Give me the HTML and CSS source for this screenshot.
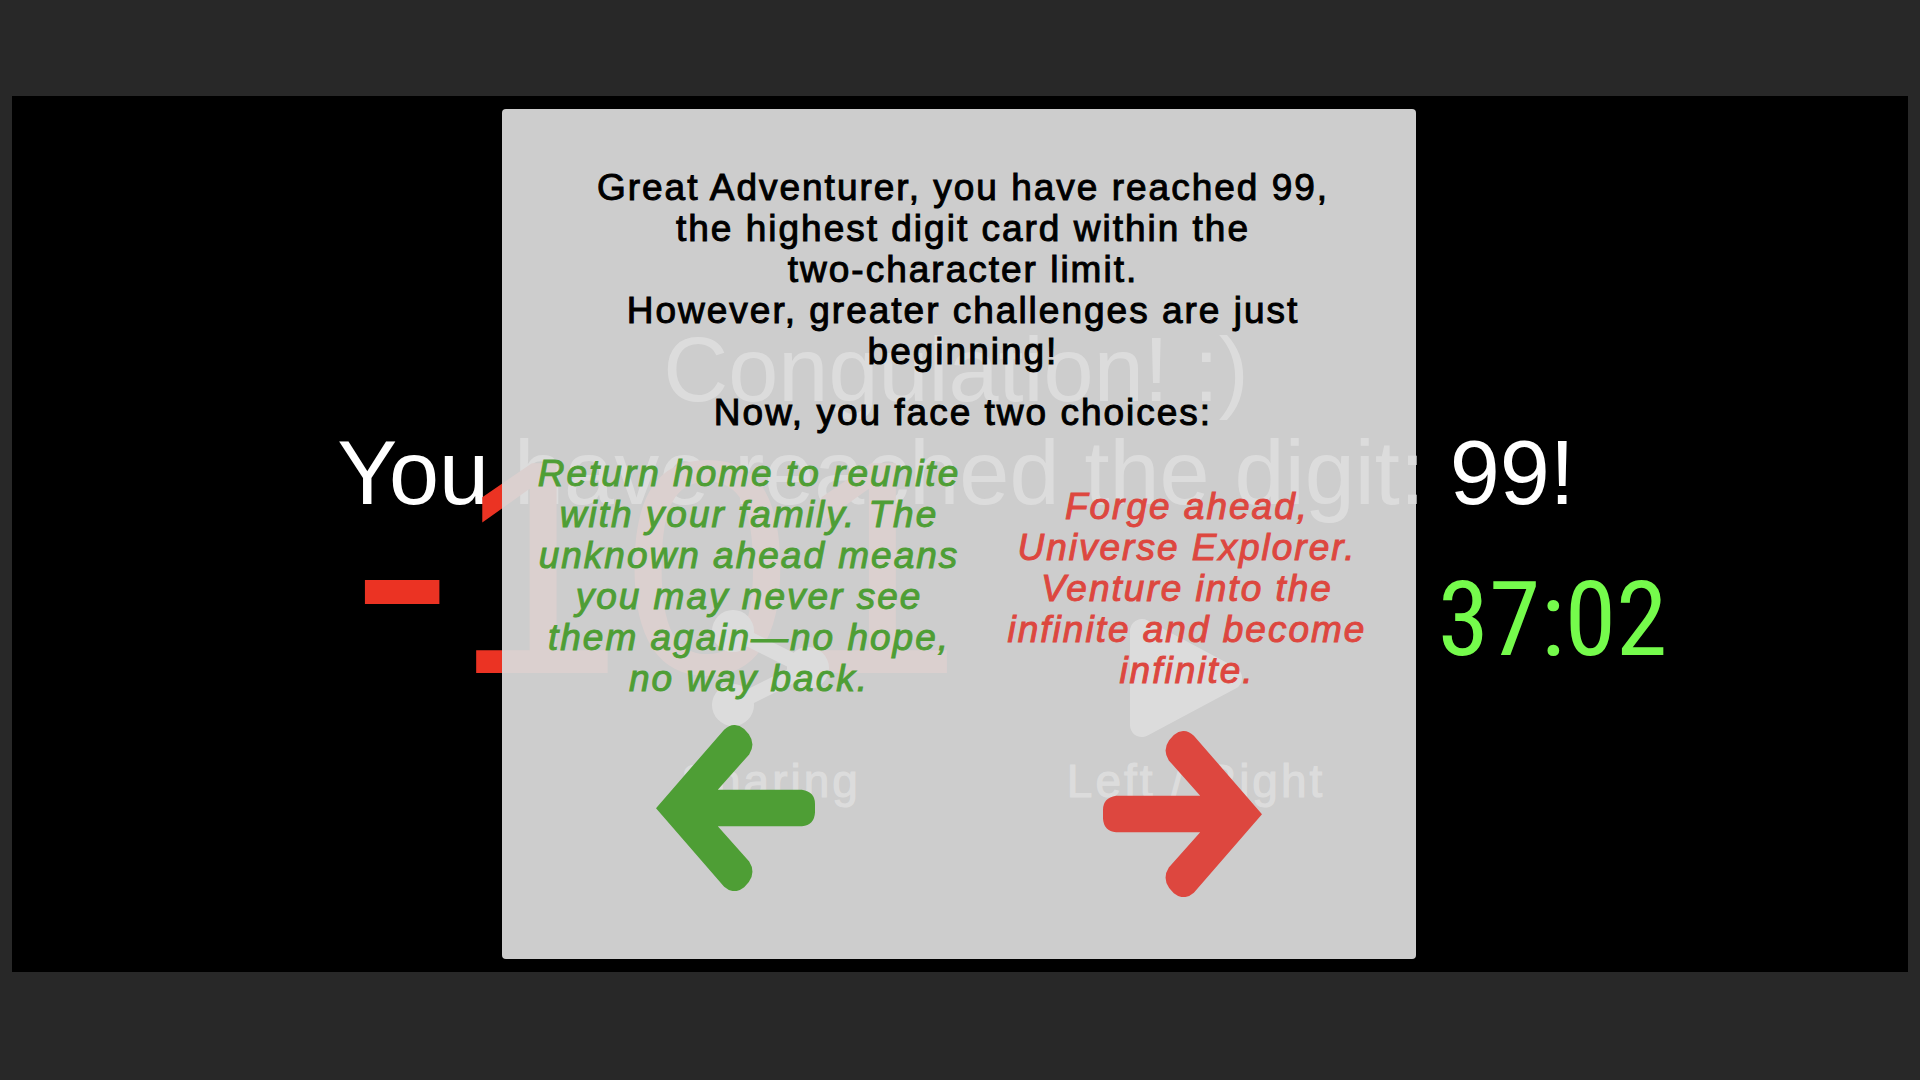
FILE: index.html
```
<!DOCTYPE html>
<html lang="en">
<head>
    <meta charset="UTF-8">
    <meta name="viewport" content="width=device-width, initial-scale=1.0">
    <title>Digit Cards</title>
    <link rel="stylesheet" href="styles.css">
</head>
<body>
    <main class="stage">
        <div class="scene">
            <p class="headline">Congulation! :)<br>You have reached the digit: 99!</p>
            <div class="penalty">-101</div>
            <div class="timer">37:02</div>
            <div class="actions">
                <button class="action">
                    <svg width="132" height="128" viewBox="0 0 132 128">
                        <path d="M28 22 L102 59 L28 96" fill="none" stroke="#fff" stroke-width="15"/>
                        <circle cx="28" cy="22" r="21" fill="#fff"/>
                        <circle cx="103" cy="59" r="21" fill="#fff"/>
                        <circle cx="28" cy="96" r="21" fill="#fff"/>
                    </svg>
                    Sharing
                </button>
                <button class="action">
                    <svg width="132" height="128" viewBox="0 0 132 128">
                        <path d="M12 22 L100 69 L12 116 Z" fill="#fff" stroke="#fff" stroke-width="24" stroke-linejoin="round"/>
                    </svg>
                    Left / Right
                </button>
            </div>
        </div>

        <section class="card">
            <p class="message">Great Adventurer, you have reached 99,<br>the highest digit card within the<br>two-character limit.<br>However, greater challenges are just<br>beginning!</p>
            <p class="message">Now, you face two choices:</p>
            <div class="choices">
                <p class="choice home" id="home-text">Return home to reunite<br>with your family. The<br>unknown ahead means<br>you may never see<br>them again—no hope,<br>no way back.</p>
                <p class="choice forge" id="forge-text">Forge ahead,<br>Universe Explorer.<br>Venture into the<br>infinite and become<br>infinite.</p>
            </div>
            <div class="arrows">
                <button class="arrow home" aria-labelledby="home-text">
                    <svg width="159" height="166" viewBox="0 0 476 497">
                        <path d="M0 249 L204 14 Q234 -13 264 12 L278 28 Q299 58 279 88 L185 194 H437 Q476 200 476 236 V262 Q474 300 437 303 H185 L279 409 Q299 440 278 470 L264 486 Q234 510 204 484 Z" fill="currentColor"/>
                    </svg>
                </button>
                <button class="arrow forge" aria-labelledby="forge-text">
                    <svg width="159" height="166" viewBox="0 0 476 497">
                        <path d="M476 249 L272 14 Q242 -13 212 12 L198 28 Q177 58 197 88 L291 194 H39 Q0 200 0 236 V262 Q2 300 39 303 H291 L197 409 Q177 440 198 470 L212 486 Q242 510 272 484 Z" fill="currentColor"/>
                    </svg>
                </button>
            </div>
        </section>
    </main>
</body>
</html>
```
FILE: styles.css
```
* {
    box-sizing: border-box;
}
body {
    margin: 0;
    min-height: 100vh;
    padding: 96px 12px 108px;
    display: flex;
    background: #282828;
    font-family: "Liberation Sans", Arial, sans-serif;
}
p {
    margin: 0;
}
button {
    border: 0;
    padding: 0;
    background: none;
    font: inherit;
    cursor: pointer;
}
svg {
    display: block;
}
.stage {
    position: relative;
    flex: 1;
    display: flex;
    justify-content: center;
    align-items: center;
    padding-right: 2px;
    background: #000;
    overflow: hidden;
}

/* finished game behind the card */
.scene {
    position: absolute;
    inset: 0;
    color: #fff;
}
.headline {
    padding: 223px 8px 0 0;
    font-size: 90px;
    line-height: 103px;
    text-align: center;
}
.penalty {
    position: absolute;
    left: 17.9%;
    top: 318px;
    font-size: 305px;
    line-height: 308px;
    color: #eb3323;
}
.timer {
    position: absolute;
    left: 75.2%;
    top: 461px;
    font-family: "Liberation Sans Narrow", "Roboto Condensed", "Liberation Sans", sans-serif;
    font-size: 104px;
    line-height: 126px;
    color: #75fb4c;
}
.actions {
    position: absolute;
    left: 35.3%;
    top: 513px;
    display: flex;
    gap: 206px;
}
.action {
    display: flex;
    flex-direction: column;
    align-items: center;
    gap: 19px;
    color: #fff;
    font-size: 46px;
    line-height: 50px;
    letter-spacing: 3px;
    -webkit-text-stroke: 1px;
}

.card {
    position: relative;
    width: 914px;
    padding: 58px 10px 62px;
    border-radius: 4px;
    background: rgba(218, 218, 218, 0.94);
}
.message,
.choice {
    font-size: 37px;
    line-height: 41px;
    letter-spacing: 2px;
    text-align: center;
    -webkit-text-stroke: 1px;
}
.message {
    padding-left: 8px;
    margin-bottom: 20px;
}
.choices {
    display: grid;
    grid-template-columns: 1fr 1fr;
    align-items: center;
    padding-left: 18px;
    margin-bottom: 26px;
}
.choice {
    font-style: italic;
}
.choice.forge {
    padding-top: 24px;
}
.arrows {
    display: grid;
    grid-template-columns: 1fr 1fr;
    justify-items: center;
    align-items: start;
}
.arrow.forge {
    margin-top: 6px;
}
.home {
    color: #4e9e35;
}
.forge {
    color: #dd473f;
}
```
